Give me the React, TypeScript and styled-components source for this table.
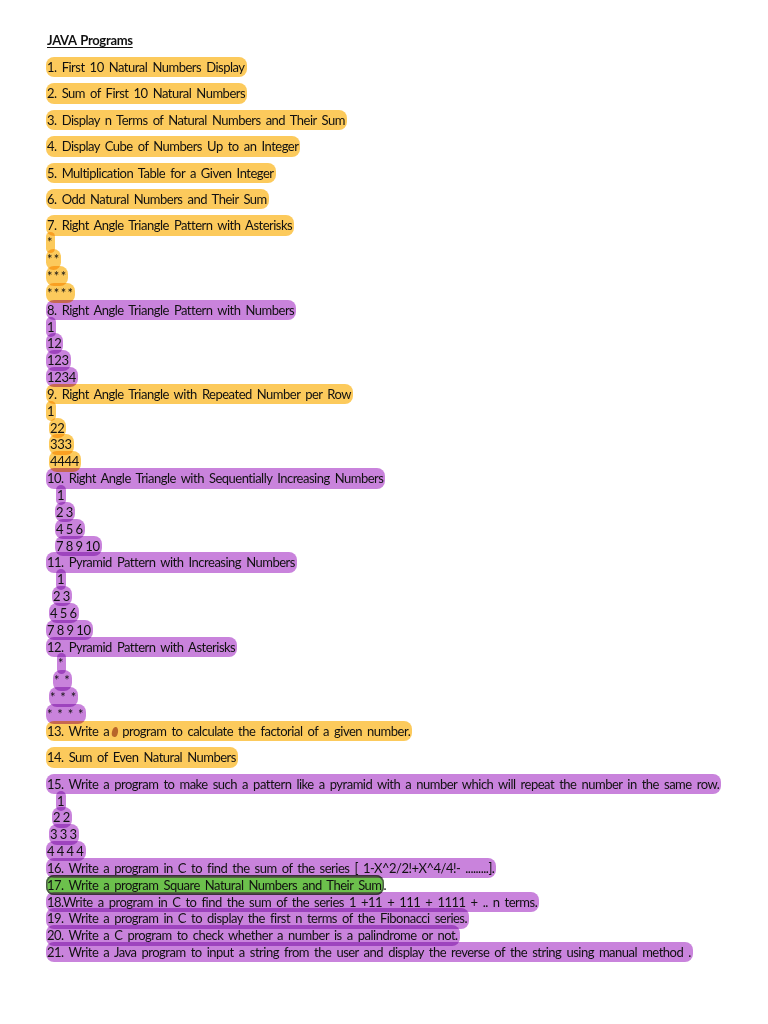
import React from 'react';
import styled, { createGlobalStyle } from 'styled-components';

type Tone = 'yellow' | 'purple' | 'green';
type Spacing = 'pattern' | 'stars' | 'wideStars';

type Line = {
  text: React.ReactNode;
  tone: Tone;
  indent?: number;
  gap?: boolean;
  tail?: string;
  spacing?: Spacing;
};

const GlobalStyle = createGlobalStyle`
  html, body {
    margin: 0;
    padding: 0;
    background: #ffffff;
  }
  body {
    font-family: Lato, "Open Sans", "Liberation Sans", sans-serif;
    color: #111111;
  }
`;

const tones: Record<Tone, string> = {
  yellow: '#fcca5c',
  purple: '#c983dc',
  green: '#6cc04c',
};

const spacings: Record<Spacing, string> = {
  pattern: 'word-spacing: -0.5px; letter-spacing: -0.3px;',
  stars: 'word-spacing: -2px; letter-spacing: 0;',
  wideStars: 'word-spacing: 1.5px; letter-spacing: 0;',
};

const Page = styled.div`
  width: 768px;
  min-height: 1024px;
  box-sizing: border-box;
  padding: 32px 0 0 46px;
  font-size: 13px;
  line-height: 16.85px;
  letter-spacing: -0.5px;
  word-spacing: 2.2px;
`;

const Title = styled.div`
  font-weight: 700;
  letter-spacing: -0.3px;
  word-spacing: 1px;
  text-decoration: underline;
  text-underline-offset: 2px;
  padding-left: 1px;
  margin-bottom: 10.2px;
`;

const Para = styled.div<{ $gap?: boolean; $indent?: number }>`
  white-space: pre;
  padding-left: ${p => p.$indent ?? 0}px;
  margin-bottom: ${p => (p.$gap ? '9.6px' : '0')};
`;

const Mark = styled.span<{ $tone: Tone; $spacing?: Spacing }>`
  background: ${p => tones[p.$tone]};
  mix-blend-mode: multiply;
  padding: 2.2px 2px 2.2px 1px;
  border-radius: 8px;
  box-decoration-break: clone;
  ${p => (p.$spacing ? spacings[p.$spacing] : '')}
  ${p => (p.$tone === 'green' ? 'box-shadow: 0 0 0 1.5px #4d5a48 inset;' : '')}
`;

const Tail = styled.span`
  color: #111111;
`;

const Blob = styled.span`
  display: inline-block;
  width: 6px;
  height: 10px;
  margin: 0 4px -1px 3px;
  border-radius: 50% 50% 45% 45%;
  background: #b8652a;
  transform: rotate(12deg);
`;

const lines: Line[] = [
  { text: '1. First 10 Natural Numbers Display', tone: 'yellow', gap: true },
  { text: '2. Sum of First 10 Natural Numbers', tone: 'yellow', gap: true },
  { text: '3. Display n Terms of Natural Numbers and Their Sum', tone: 'yellow', gap: true },
  { text: '4. Display Cube of Numbers Up to an Integer', tone: 'yellow', gap: true },
  { text: '5. Multiplication Table for a Given Integer', tone: 'yellow', gap: true },
  { text: '6. Odd Natural Numbers and Their Sum', tone: 'yellow', gap: true },
  { text: '7. Right Angle Triangle Pattern with Asterisks', tone: 'yellow' },
  { text: '*', tone: 'yellow', spacing: 'stars' },
  { text: '* *', tone: 'yellow', spacing: 'stars' },
  { text: '* * *', tone: 'yellow', spacing: 'stars' },
  { text: '* * * *', tone: 'yellow', spacing: 'stars' },
  { text: '8. Right Angle Triangle Pattern with Numbers', tone: 'purple' },
  { text: '1', tone: 'purple', spacing: 'pattern' },
  { text: '12', tone: 'purple', spacing: 'pattern' },
  { text: '123', tone: 'purple', spacing: 'pattern' },
  { text: '1234', tone: 'purple', spacing: 'pattern' },
  { text: '9. Right Angle Triangle with Repeated Number per Row', tone: 'yellow' },
  { text: '1', tone: 'yellow', spacing: 'pattern' },
  { text: '22', tone: 'yellow', indent: 3, spacing: 'pattern' },
  { text: '333', tone: 'yellow', indent: 3, spacing: 'pattern' },
  { text: '4444', tone: 'yellow', indent: 3, spacing: 'pattern' },
  { text: '10. Right Angle Triangle with Sequentially Increasing Numbers', tone: 'purple' },
  { text: '1', tone: 'purple', indent: 10, spacing: 'pattern' },
  { text: '2 3', tone: 'purple', indent: 9, spacing: 'pattern' },
  { text: '4 5 6', tone: 'purple', indent: 9, spacing: 'pattern' },
  { text: '7 8 9 10', tone: 'purple', indent: 9, spacing: 'pattern' },
  { text: '11. Pyramid Pattern with Increasing Numbers', tone: 'purple' },
  { text: '1', tone: 'purple', indent: 10, spacing: 'pattern' },
  { text: '2 3', tone: 'purple', indent: 6, spacing: 'pattern' },
  { text: '4 5 6', tone: 'purple', indent: 3, spacing: 'pattern' },
  { text: '7 8 9 10', tone: 'purple', spacing: 'pattern' },
  { text: '12. Pyramid Pattern with Asterisks', tone: 'purple' },
  { text: '*', tone: 'purple', indent: 11, spacing: 'wideStars' },
  { text: '* *', tone: 'purple', indent: 7, spacing: 'wideStars' },
  { text: '* * *', tone: 'purple', indent: 3, spacing: 'wideStars' },
  { text: '* * * *', tone: 'purple', spacing: 'wideStars' },
  {
    text: (
      <>
        13. Write a<Blob />program to calculate the factorial of a given number.
      </>
    ),
    tone: 'yellow',
    gap: true,
  },
  { text: '14. Sum of Even Natural Numbers', tone: 'yellow', gap: true },
  {
    text: '15. Write a program to make such a pattern like a pyramid with a number which will repeat the number in the same row.',
    tone: 'purple',
  },
  { text: '1', tone: 'purple', indent: 10, spacing: 'pattern' },
  { text: '2 2', tone: 'purple', indent: 6, spacing: 'pattern' },
  { text: '3 3 3', tone: 'purple', indent: 3, spacing: 'pattern' },
  { text: '4 4 4 4', tone: 'purple', spacing: 'pattern' },
  { text: '16. Write a program in C to find the sum of the series [ 1-X^2/2!+X^4/4!- .........].', tone: 'purple' },
  { text: '17. Write a program Square Natural Numbers and Their Sum', tone: 'green', tail: '.' },
  { text: '18.Write a program in C to find the sum of the series 1 +11 + 111 + 1111 + .. n terms.', tone: 'purple' },
  { text: '19. Write a program in C to display the first n terms of the Fibonacci series.', tone: 'purple' },
  { text: '20. Write a C program to check whether a number is a palindrome or not.', tone: 'purple' },
  {
    text: '21. Write a Java program to input a string from the user and display the reverse of the string using manual method .',
    tone: 'purple',
  },
];

const App: React.FC = () => (
  <>
    <GlobalStyle />
    <Page>
      <Title>JAVA Programs</Title>
      {lines.map((line, i) => (
        <Para key={i} $gap={line.gap} $indent={line.indent}>
          <Mark $tone={line.tone} $spacing={line.spacing}>
            {line.text}
          </Mark>
          {line.tail && <Tail>{line.tail}</Tail>}
        </Para>
      ))}
    </Page>
  </>
);

export default App;
